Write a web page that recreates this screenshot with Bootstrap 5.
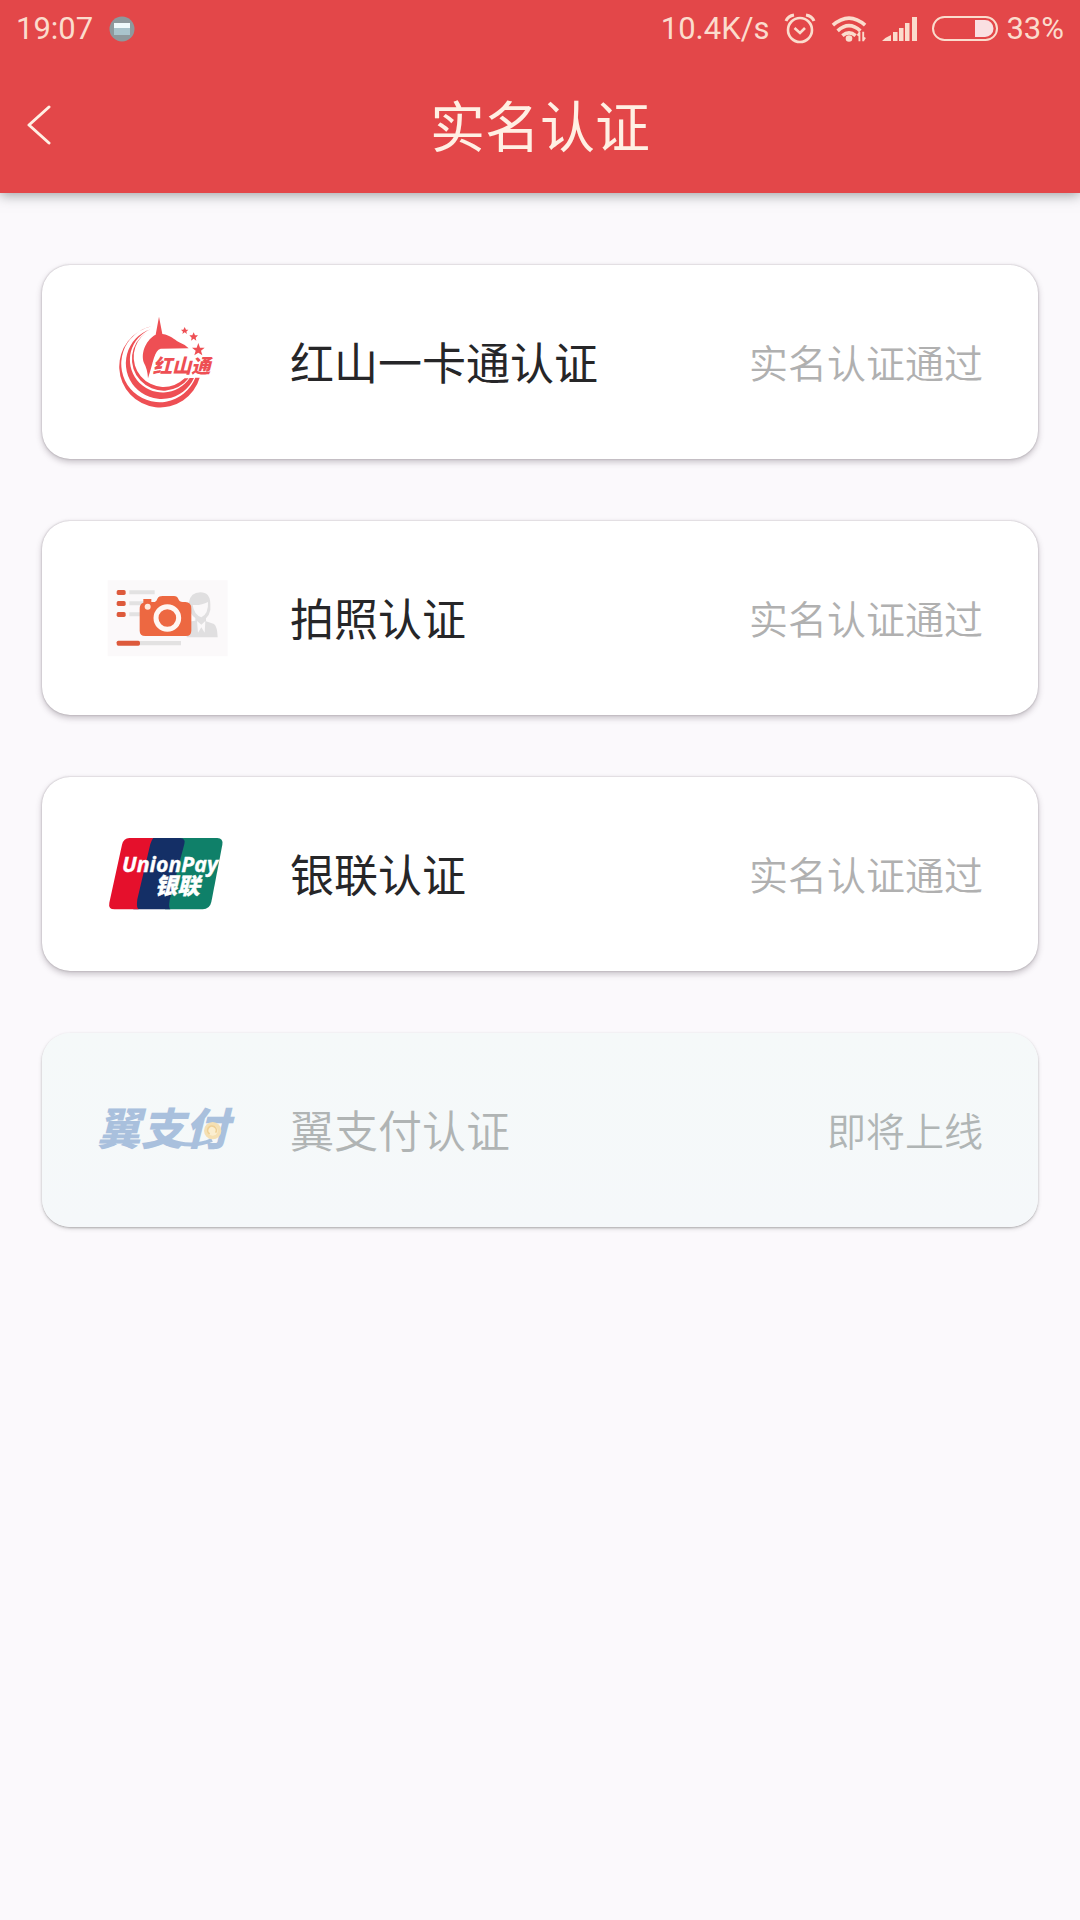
<!DOCTYPE html>
<html lang="zh-CN">
<head>
<meta charset="utf-8">
<meta name="viewport" content="width=device-width, initial-scale=1">
<title>实名认证</title>
<link href="https://cdn.jsdelivr.net/npm/bootstrap@5.3.0/dist/css/bootstrap.min.css" rel="stylesheet">
<style>
  body { background: #fbf9fc; font-family: Roboto, "Noto Sans CJK SC", sans-serif; }
  .app-head { background: #e34749; color: #fff0e4; box-shadow: 0 2px 12px rgba(60, 70, 70, .5); }
  .status-row { height: 58px; padding: 0 16px; font-size: 31px; line-height: 32px; color: #fbdccd; }
  .status-icons { gap: 15px; }
  .title-row { display: grid; grid-template-columns: 80px 1fr 80px; height: 135px; align-items: center; }
  .back-btn { width: 80px; height: 80px; border: 0; background: none; color: inherit; padding: 0 2px 2px 0; line-height: 0; }
  .page-title { font-size: 55px; line-height: 80px; font-weight: 400; padding-top: 4px; }
  .auth-list { padding: 72px 42px; gap: 62px; }
  .auth-card { height: 194px; padding: 0 55px 0 48px; border-radius: 28px; background: #fff; color: #262628; text-decoration: none;
    box-shadow: 0 0 2px rgba(60, 45, 60, .35), 0 3px 6px rgba(60, 45, 60, .28); }
  .auth-name, .auth-state { padding-top: 6px; }
  .auth-name { margin-left: 50px; font-size: 44px; line-height: 64px; }
  .auth-state { font-size: 39px; line-height: 56px; color: #b0b0b0; font-weight: 350; }
  .auth-soon { background: linear-gradient(#f5f9f9, #f5f8fa); color: #b0b4b4;
    box-shadow: 0 1px 2px rgba(60, 60, 60, .3), 0 2px 4px rgba(60, 60, 60, .16); }
  .auth-soon .auth-name { font-weight: 350; }
  .auth-soon .auth-state { color: #b0b5b5; }
  .logo-cjk { font-family: "Noto Sans CJK SC", sans-serif; font-weight: 900; font-style: italic; }
  .logo-latin { font-family: "Open Sans", sans-serif; font-weight: 700; font-style: italic; }
</style>
</head>
<body>
<header class="app-head">
  <div class="status-row d-flex align-items-center justify-content-between">
    <div class="d-flex align-items-center">
      <span>19:07</span>
      <svg class="ms-3" width="26" height="26" viewBox="0 0 26 26" aria-hidden="true">
        <circle cx="13" cy="13" r="12.5" fill="#8d999d"/>
        <path d="M5 7h16v12H5z" fill="#a9c4cc"/><path d="M5 7h16v5H5z" fill="#effafc"/>
      </svg>
    </div>
    <div class="status-icons d-flex align-items-center">
      <span>10.4K/s</span>
      <svg width="32" height="32" viewBox="0 0 32 32" fill="none" stroke="currentColor" stroke-width="2.6" aria-hidden="true">
        <circle cx="16" cy="17" r="12"/><path d="M10.500 15l5.500 5 5-5"/>
        <path d="M2 8q2-5 8-6M30 8q-2-5-8-6" stroke-width="3"/>
      </svg>
      <svg width="36" height="28" viewBox="0 0 38 28" fill="none" stroke="currentColor" stroke-width="3.800" aria-hidden="true">
        <path d="M2 10q17-15 34 0"/><path d="M7 16q12-11 24 0"/><path d="M12 21q7-6 14 0"/>
        <circle cx="19" cy="24" r="3.500" fill="currentColor" stroke="none"/>
        <path d="M30 17v10M34 17v10M28 21l2-3M36 23l-2 3" stroke-width="2"/>
      </svg>
      <svg width="35" height="24" viewBox="0 0 35 24" fill="currentColor" aria-hidden="true">
        <path d="M0 24q4-4 9-6v6zM11 15h4.500v9h-4.500zM17 11h4.500v13h-4.500zM23 6h4.500v18h-4.500zM30 0h5v24h-5z"/>
      </svg>
      <div class="d-flex align-items-center gap-2">
        <svg width="66" height="26" viewBox="0 0 66 26" aria-hidden="true">
          <rect x="1" y="1" width="64" height="23" rx="11.500" fill="none" stroke="currentColor" stroke-width="2"/>
          <path d="M43 4h10a8.500 8.500 0 0 1 0 17H43z" fill="#fae0e2"/>
        </svg>
        <span>33%</span>
      </div>
    </div>
  </div>
  <div class="title-row">
    <button class="back-btn" type="button" aria-label="返回">
      <svg width="24" height="40" viewBox="0 0 24 40" fill="none" stroke="currentColor" stroke-width="3" stroke-linecap="round" stroke-linejoin="round" aria-hidden="true"><path d="M22 2L2 20 22 38"/></svg>
    </button>
    <h1 class="page-title text-center mb-0">实名认证</h1>
  </div>
</header>

<main class="auth-list d-flex flex-column">
  <a class="auth-card d-flex align-items-center" href="#hongshan">
    <svg class="flex-shrink-0" width="150" height="120" viewBox="0 5 450 360" fill="#ee4f54" aria-hidden="true">
      <path d="M185 78A123 123 0 1 0 329 232L316 232A115 115 0 1 1 185 78z"/>
      <path d="M182 87A107 107 0 1 0 312 233L299 233A98 98 0 1 1 182 87z"/>
      <path d="M168 97A95 95 0 1 0 296 234L284 234A90 90 0 1 1 168 97z"/>
      <path d="M207 49L217 101C243 105 252 117 266 125Q284 132 296 144L212 145C193 150 190 185 174 234Q172 205 162 188C150 155 172 115 197 103z"/>
      <path d="M0-20L5-6 19-6 8 3 12 17 0 9-12 17-8 3-19-6-5-6z" transform="translate(325 148)"/>
      <path d="M0-13L4-4 13-4 6 3 8 12 0 6-8 12-6 3-13-4-4-4z" transform="translate(311 109)"/>
      <path d="M0-11L4-3 11-3 5 3 7 10 0 5-7 10-5 3-11-3-4-3z" transform="translate(284 91)"/>
      <text class="logo-cjk" x="188" y="218" font-size="58">红山通</text>
    </svg>
    <span class="auth-name">红山一卡通认证</span>
    <span class="auth-state ms-auto">实名认证通过</span>
  </a>

  <a class="auth-card d-flex align-items-center" href="#photo">
    <svg class="flex-shrink-0" width="150" height="110" viewBox="0 13 450 330" aria-hidden="true">
      <path fill="#fbf9fa" d="M53 65h360v228H53z"/>
      <path fill="#e3e2e2" d="M118 95h76v12h-76zM118 128h44v12h-44zM118 161h44v12h-44zM150 247h123v13H150z"/>
      <path fill="#e0dfe0" d="M296 132Q302 101 331 101T361 135V154Q358 170 348 179V188L372 196Q382 204 383 236H290V190L316 186V178Q299 168 296 132z"/>
      <path fill="#faf8f9" d="M308 139Q334 141 354 130Q356 165 334 176Q312 168 308 139zM321 187L334 198 346 187 344 222 334 206 324 222z"/>
      <g fill="#dd5a3c"><rect x="80" y="94" width="27" height="15" rx="5"/><rect x="80" y="127" width="27" height="15" rx="5"/><rect x="80" y="160" width="27" height="15" rx="5"/><rect x="80" y="246" width="70" height="15" rx="5"/></g>
      <path fill="#ed6841" d="M149 152Q149 134 160 132V121H184V130H194Q200 128 203 119Q206 112 218 112H252Q262 112 265 121Q268 130 278 130H286Q304 130 304 150V216Q304 232 288 232H166Q149 232 149 216z"/>
      <circle cx="232" cy="178" r="34" fill="none" stroke="#fff7f2" stroke-width="15"/>
      <circle cx="173" cy="144" r="9" fill="#ffe9dc"/>
    </svg>
    <span class="auth-name">拍照认证</span>
    <span class="auth-state ms-auto">实名认证通过</span>
  </a>

  <a class="auth-card d-flex align-items-center" href="#unionpay">
    <svg class="flex-shrink-0" width="150" height="110" viewBox="0 -2 450 330" aria-hidden="true">
      <path fill="#0f8069" d="M270 55H382Q400 55 397 75L364 247Q359 269 338 269H225z"/>
      <path fill="#142f66" d="M180 55H270Q288 57 283 73L239 241Q235 266 241 269H130z"/>
      <path fill="#e5102c" d="M118 55H190Q185 60 181 73L142 239Q138 266 146 269H74Q54 269 58 249L96 75Q101 55 118 55z"/>
      <g fill="#fff" stroke="#fff" stroke-width="1">
        <text class="logo-latin" x="96" y="156" font-size="64">UnionPay</text>
        <text class="logo-cjk" x="194" y="223" font-size="68">银联</text>
      </g>
    </svg>
    <span class="auth-name">银联认证</span>
    <span class="auth-state ms-auto">实名认证通过</span>
  </a>

  <a class="auth-card auth-soon d-flex align-items-center" href="#bestpay" aria-disabled="true">
    <svg class="flex-shrink-0" width="150" height="80" viewBox="30 0 450 240" aria-hidden="true">
      <text class="logo-cjk" x="50" y="165" font-size="132" fill="#a9c0dd">翼支付</text>
      <path fill="none" stroke="#a9c0dd" stroke-width="12" d="M262 148Q330 178 396 150"/>
      <circle cx="398" cy="122" r="26" fill="#f5e0b4"/><circle cx="398" cy="122" r="15" fill="#fbeed0"/>
      <path fill="none" stroke="#efd096" stroke-width="5" d="M389 132a13 13 0 1 1 18-4"/>
    </svg>
    <span class="auth-name">翼支付认证</span>
    <span class="auth-state ms-auto">即将上线</span>
  </a>
</main>
<script src="https://cdn.jsdelivr.net/npm/bootstrap@5.3.0/dist/js/bootstrap.bundle.min.js"></script>
</body>
</html>
